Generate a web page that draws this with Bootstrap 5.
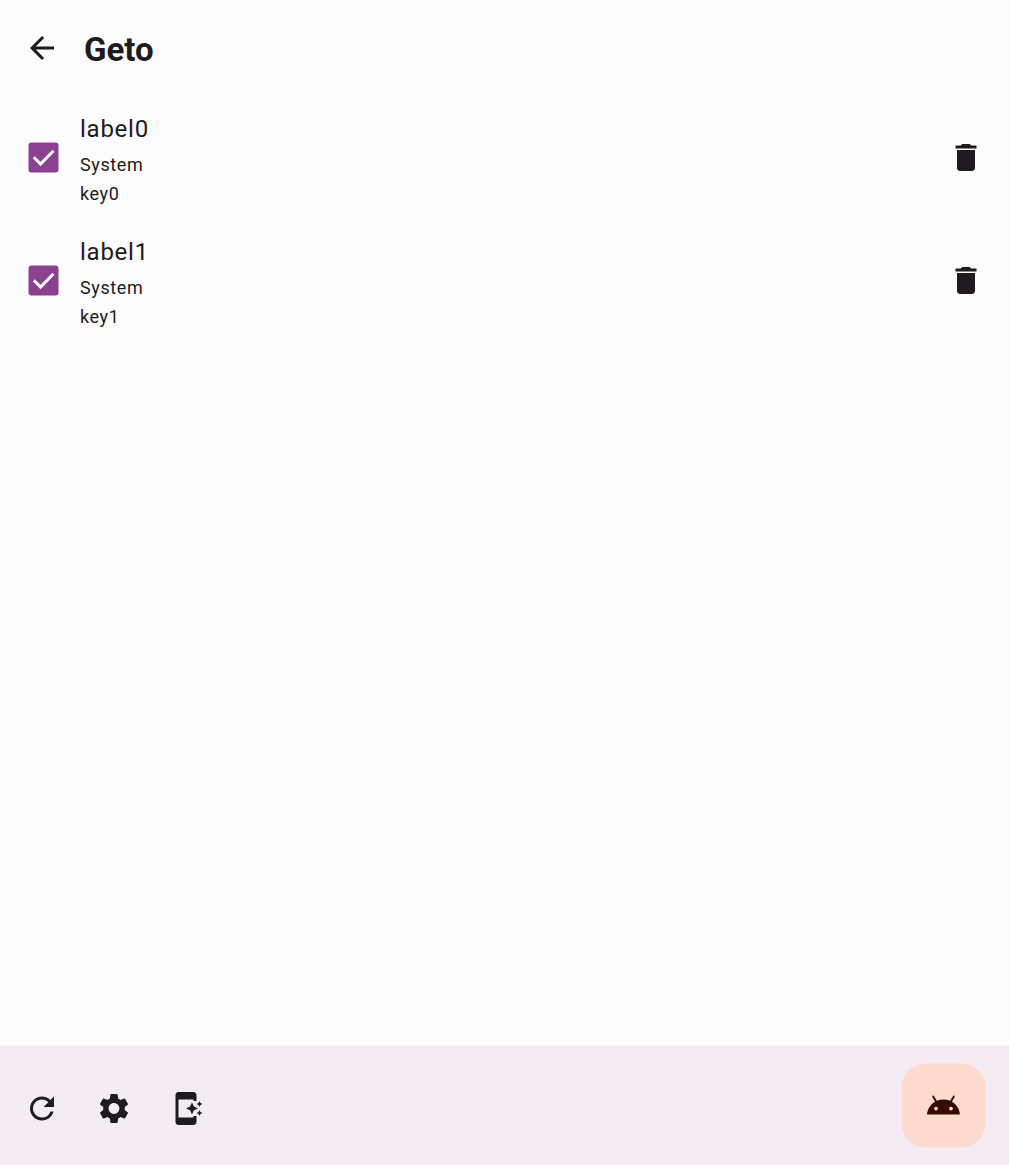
<!DOCTYPE html>
<html lang="en">
<head>
<meta charset="utf-8">
<meta name="viewport" content="width=device-width, initial-scale=1">
<title>Geto</title>
<link href="https://cdn.jsdelivr.net/npm/bootstrap@5.3.0/dist/css/bootstrap.min.css" rel="stylesheet">
<style>
body{font-family:Roboto,"Liberation Sans",sans-serif;background:#fcfcfc;color:#1f1a1d}
svg{display:block;fill:currentColor}
.icon-btn{width:72px;height:72px;padding:0;border:0;background:none;color:inherit}
.top-bar{height:96px;padding-left:6px}
.top-title{font-size:33px;line-height:42px;font-weight:700;margin:4px 0 0 6px}
.setting-item{height:123px;padding:0 7px 0 28px}
.check-box{width:32px;height:32px;margin:1px 20px 0 0;color:#8b4190}
.item-label{font-size:24px;line-height:36px;letter-spacing:.75px}
.item-meta{font-size:18px;line-height:24px;letter-spacing:.6px}
.item-lines{gap:5px;padding-top:6px;margin-bottom:-2px}
.bottom-bar{height:120px;background:#f3ecf3;border-top:1px solid #f7f3f7;padding:0 24px 0 6px}
.bottom-actions{padding-top:26px}
.fab{width:84px;height:84px;border:0;border-radius:24px;background:#ffdad0;color:#370b00;margin-top:17px;padding:0;transform:translate(.5px,.5px)}
</style>
<script src="https://cdn.jsdelivr.net/npm/bootstrap@5.3.0/dist/js/bootstrap.bundle.min.js"></script>
</head>
<body>
<div class="d-flex flex-column vh-100">
  <header class="top-bar d-flex align-items-center flex-shrink-0">
    <button class="icon-btn d-flex align-items-center justify-content-center" aria-label="Back"><svg width="36" height="36" viewBox="0 0 24 24"><path d="M20 11H7.83l5.59-5.59L12 4l-8 8 8 8 1.41-1.41L7.83 13H20v-2z"/></svg></button>
    <h1 class="top-title">Geto</h1>
  </header>
  <main class="flex-grow-1">
    <div class="setting-item d-flex align-items-center">
      <div class="check-box flex-shrink-0" role="checkbox" aria-checked="true"><svg width="32" height="32" viewBox="0 0 32 32"><rect x=".5" y=".5" width="30" height="30" rx="3"/><path d="M5.8 15.3l6.7 6.7L25.5 8.8" fill="none" stroke="#fff" stroke-width="3"/></svg></div>
      <div class="flex-grow-1">
        <div class="item-label">label0</div>
        <div class="item-lines d-flex flex-column">
          <div class="item-meta">System</div>
          <div class="item-meta">key0</div>
        </div>
      </div>
      <button class="icon-btn d-flex align-items-center justify-content-center" aria-label="Delete"><svg width="36" height="36" viewBox="0 .333 24 24"><path d="M6 19c0 1.1.9 2 2 2h8c1.1 0 2-.9 2-2V7H6v12zM19 4h-3.5l-1-1h-5l-1 1H5v2h14V4z"/></svg></button>
    </div>
    <div class="setting-item d-flex align-items-center">
      <div class="check-box flex-shrink-0" role="checkbox" aria-checked="true"><svg width="32" height="32" viewBox="0 0 32 32"><rect x=".5" y=".5" width="30" height="30" rx="3"/><path d="M5.8 15.3l6.7 6.7L25.5 8.8" fill="none" stroke="#fff" stroke-width="3"/></svg></div>
      <div class="flex-grow-1">
        <div class="item-label">label1</div>
        <div class="item-lines d-flex flex-column">
          <div class="item-meta">System</div>
          <div class="item-meta">key1</div>
        </div>
      </div>
      <button class="icon-btn d-flex align-items-center justify-content-center" aria-label="Delete"><svg width="36" height="36" viewBox="0 .333 24 24"><path d="M6 19c0 1.1.9 2 2 2h8c1.1 0 2-.9 2-2V7H6v12zM19 4h-3.5l-1-1h-5l-1 1H5v2h14V4z"/></svg></button>
    </div>
  </main>
  <footer class="bottom-bar d-flex justify-content-between align-items-start flex-shrink-0">
    <div class="bottom-actions d-flex">
      <button class="icon-btn d-flex align-items-center justify-content-center" aria-label="Refresh"><svg width="36" height="36" viewBox="0 -.333 24 24"><path d="M17.65 6.35A7.958 7.958 0 0 0 12 4c-4.42 0-7.99 3.58-7.99 8s3.57 8 7.99 8c3.73 0 6.84-2.55 7.73-6h-2.08A5.99 5.99 0 0 1 12 18c-3.31 0-6-2.69-6-6s2.69-6 6-6c1.66 0 3.14.69 4.22 1.78L13 11h7V4l-2.35 2.35z"/></svg></button>
      <button class="icon-btn d-flex align-items-center justify-content-center" aria-label="Settings"><svg width="36" height="36" viewBox="0 -.333 24 24"><path d="M19.14 12.94c.04-.3.06-.61.06-.94 0-.32-.02-.64-.07-.94l2.03-1.58c.18-.14.23-.41.12-.61l-1.92-3.32c-.12-.22-.37-.29-.59-.22l-2.39.96c-.5-.38-1.03-.7-1.62-.94l-.36-2.54c-.04-.24-.24-.41-.48-.41h-3.84c-.24 0-.43.17-.47.41l-.36 2.54c-.59.24-1.13.57-1.62.94l-2.39-.96c-.22-.08-.47 0-.59.22L2.74 8.87c-.12.21-.08.47.12.61l2.03 1.58c-.05.3-.09.63-.09.94s.02.64.07.94l-2.03 1.58c-.18.14-.23.41-.12.61l1.92 3.32c.12.22.37.29.59.22l2.39-.96c.5.38 1.03.7 1.62.94l.36 2.54c.05.24.24.41.48.41h3.84c.24 0 .44-.17.47-.41l.36-2.54c.59-.24 1.13-.56 1.62-.94l2.39.96c.22.08.47 0 .59-.22l1.92-3.32c.12-.22.07-.47-.12-.61l-2.01-1.58zM12 15.6c-1.98 0-3.6-1.62-3.6-3.6s1.62-3.6 3.6-3.6 3.6 1.62 3.6 3.6-1.62 3.6-3.6 3.6z"/></svg></button>
      <button class="icon-btn d-flex align-items-center justify-content-center" aria-label="Shortcut"><svg width="36" height="36" viewBox="0 -.333 24 24"><path d="M17 18H7V6h10v1h2V3c0-1.1-.9-2-2-2H7c-1.1 0-2 .9-2 2v18c0 1.1.9 2 2 2h10c1.1 0 2-.9 2-2v-4h-2v1zM20.38 9.62L21 11l.62-1.38L23 9l-1.38-.62L21 7l-.62 1.38L19 9zM16 8l-1.25 2.75L12 12l2.75 1.25L16 16l1.25-2.75L20 12l-2.75-1.25zM21 13l-.62 1.38L19 15l1.38.62L21 17l.62-1.38L23 15l-1.38-.62z"/></svg></button>
    </div>
    <button class="fab d-flex align-items-center justify-content-center" aria-label="Launch app"><svg width="36" height="36" viewBox="0 0 24 24"><path d="M17.6 9.48l1.84-3.18c.16-.31.04-.69-.26-.85-.29-.15-.65-.06-.83.22l-1.88 3.24a11.463 11.463 0 0 0-8.94 0L5.65 5.67c-.19-.29-.58-.38-.87-.2-.28.18-.37.54-.22.83L6.4 9.48C3.3 11.25 1.28 14.44 1 18h22c-.28-3.56-2.3-6.75-5.4-8.52zM7 15.25a1.25 1.25 0 1 1 0-2.5 1.25 1.25 0 0 1 0 2.5zm10 0a1.25 1.25 0 1 1 0-2.5 1.25 1.25 0 0 1 0 2.5z"/></svg></button>
  </footer>
</div>
</body>
</html>
